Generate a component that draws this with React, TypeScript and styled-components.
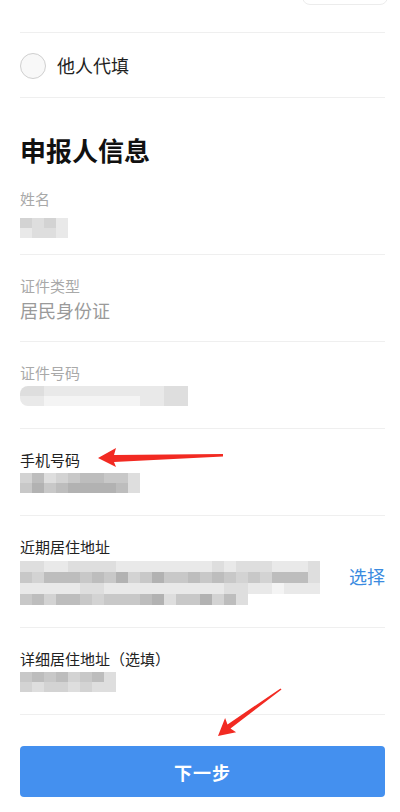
import styled, { createGlobalStyle } from "styled-components";

const GlobalStyle = createGlobalStyle`
  html, body {
    margin: 0;
    padding: 0;
    background: #fff;
  }
  body {
    font-family: "Noto Sans CJK SC", "Noto Sans", sans-serif;
    -webkit-font-smoothing: antialiased;
  }
`;

const Page = styled.div`
  position: relative;
  width: 400px;
  min-height: 812px;
  padding: 0 15px 0 20px;
  box-sizing: border-box;
  overflow: hidden;
`;

const TopStub = styled.div`
  display: flex;
  justify-content: flex-end;
  height: 32px;
`;

const StubBox = styled.div`
  width: 84px;
  height: 34px;
  margin-top: -31px;
  margin-right: -3px;
  border: 1px solid #ececec;
  border-radius: 8px;
`;

const Divider = styled.div`
  height: 1px;
  background: #efefef;
`;

const RadioRow = styled.label`
  display: flex;
  align-items: center;
  height: 64px;
  gap: 11px;
`;

const RadioDot = styled.span`
  width: 26px;
  height: 26px;
  border-radius: 50%;
  border: 1px solid #cfcfcf;
  background: #f8f8f8;
  box-sizing: border-box;
  margin-top: 1px;
`;

const RadioText = styled.span`
  font-size: 18px;
  color: #1e1e1e;
`;

const SectionTitle = styled.h2`
  margin: 34px 0 20px;
  font-size: 26px;
  line-height: 36px;
  font-weight: 700;
  color: #111;
`;

const Field = styled.div<{ $first?: boolean }>`
  padding: ${(p) => (p.$first ? "0 0 12px" : "20px 0 18px")};
`;

const Label = styled.div<{ $muted?: boolean }>`
  font-size: 15px;
  line-height: 22px;
  color: ${(p) => (p.$muted ? "#a9a9a9" : "#222")};
`;

const Value = styled.div`
  font-size: 18px;
  line-height: 26px;
  color: #9a9a9a;
`;

const ValueRow = styled.div`
  display: flex;
  align-items: center;
  justify-content: space-between;
`;

const PickLink = styled.span`
  font-size: 18px;
  color: #3b8be0;
  margin-top: 6px;
`;

const MosaicBox = styled.div<{ $round?: boolean; $top: number }>`
  display: flex;
  flex-direction: column;
  margin: ${(p) => p.$top}px 0 4px;
  border-radius: ${(p) => (p.$round ? "8px 0 0 8px" : "0")};
  overflow: hidden;
  width: max-content;
`;

const MosaicRow = styled.div`
  display: flex;
`;

const Cell = styled.span<{ $h: number }>`
  width: 12px;
  height: ${(p) => p.$h}px;
`;

const NextButton = styled.button`
  display: block;
  width: 100%;
  height: 51px;
  margin-top: 31px;
  border: none;
  border-radius: 4px;
  background: #4490ef;
  color: #fff;
  font-family: "Noto Sans CJK SC", sans-serif;
  font-size: 18px;
  font-weight: 700;
  letter-spacing: 1px;
`;

const Overlay = styled.svg`
  position: absolute;
  left: 0;
  top: 0;
  pointer-events: none;
`;

function gray(d: string) {
  const n = parseInt(d, 10);
  const v = 244 - n * 11;
  return `rgb(${v},${v},${v})`;
}

function Mosaic({
  rows,
  h = 10,
  top = 2,
  round,
}: {
  rows: string[];
  h?: number;
  top?: number;
  round?: boolean;
}) {
  return (
    <MosaicBox $round={round} $top={top}>
      {rows.map((r, i) => (
        <MosaicRow key={i}>
          {r.split("").map((c, j) => (
            <Cell key={j} $h={h} style={{ background: c === "." ? "transparent" : gray(c) }} />
          ))}
        </MosaicRow>
      ))}
    </MosaicBox>
  );
}

export default function App() {
  return (
    <>
      <GlobalStyle />
      <Page>
        <TopStub>
          <StubBox />
        </TopStub>
        <Divider />
        <RadioRow>
          <RadioDot />
          <RadioText>他人代填</RadioText>
        </RadioRow>
        <Divider />

        <SectionTitle>申报人信息</SectionTitle>

        <Field $first>
          <Label $muted>姓名</Label>
          <Mosaic top={8} rows={["3231", "1221"]} />
        </Field>
        <Divider />

        <Field>
          <Label $muted>证件类型</Label>
          <Value>居民身份证</Value>
        </Field>
        <Divider />

        <Field>
          <Label $muted>证件号码</Label>
          <Mosaic round rows={["22111111111122", "11000000001122"]} />
        </Field>
        <Divider />

        <Field>
          <Label>手机号码</Label>
          <Mosaic rows={["3523455442", "4645666652"]} />
        </Field>
        <Divider />

        <Field>
          <ValueRow>
            <div>
              <Label>近期居住地址</Label>
              <Mosaic
                h={11}
                top={3}
                rows={[
                  "2211222211111111212221112",
                  "4355545463464454543435552",
                  "1111122111111111122110111",
                  "4535543444562446352......",
                ]}
              />
            </div>
            <PickLink>选择</PickLink>
          </ValueRow>
        </Field>
        <Divider />

        <Field>
          <Label>详细居住地址（选填）</Label>
          <Mosaic rows={["45453452", "32332322"]} />
        </Field>
        <Divider />

        <NextButton>下一步</NextButton>

        <Overlay width={400} height={812} viewBox="0 0 400 812">
          <polygon
            fill="#f22a22"
            points="98,458 116,448 114,455 223,454 223,456.5 114,462 116,467"
          />
          <polygon
            fill="#f22a22"
            points="218,736 225.1,718.1 227.5,724.4 280.5,688.4 281.5,689.6 230.5,728.4 236.1,732.3"
          />
        </Overlay>
      </Page>
    </>
  );
}
